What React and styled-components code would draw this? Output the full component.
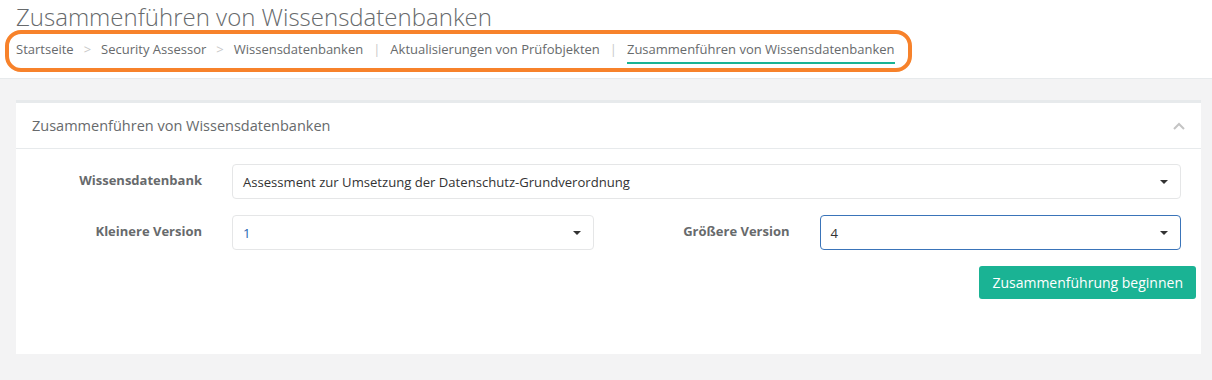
import React from "react";
import styled, { createGlobalStyle } from "styled-components";

const GlobalStyle = createGlobalStyle`
  body {
    margin: 0;
    background: #f3f3f4;
    font-family: "Open Sans", "Liberation Sans", sans-serif;
    color: #676a6c;
  }
`;

const PageHeader = styled.div`
  position: relative;
  background: #fff;
  height: 78px;
  border-bottom: 1px solid #e7eaec;
  padding: 0 16px;
`;

const Title = styled.h2`
  margin: 0;
  padding-top: 3px;
  font-size: 24px;
  font-weight: 300;
  line-height: 28px;
  color: #676a6c;
`;

const Crumbs = styled.ol`
  list-style: none;
  margin: 9px 0 0;
  padding: 0;
  display: flex;
  align-items: center;
  font-size: 13px;
`;

const Crumb = styled.li`
  padding-bottom: 4px;
  border-bottom: 2px solid ${(p) => (p.$active ? "#1ab394" : "transparent")};
  line-height: 18px;
  color: #676a6c;
`;

const Sep = styled.span`
  color: #c8c8c8;
  font-size: 13px;
  padding: 0 10px 6px;
  line-height: 18px;
`;

const Highlight = styled.div`
  position: absolute;
  left: 5px;
  top: 30px;
  width: 899px;
  height: 34px;
  border: 4px solid #f7822b;
  border-radius: 16px;
  pointer-events: none;
`;

const Panel = styled.section`
  margin: 21px 11px 0 16px;
  background: #fff;
  border-top: 3px solid #e7eaec;
`;

const PanelHead = styled.div`
  display: flex;
  align-items: center;
  justify-content: space-between;
  height: 45px;
  padding: 0 16px;
  border-bottom: 1px solid #e7eaec;
  font-size: 14.5px;
`;

const PanelBody = styled.div`
  padding: 15px 20px 55px 16px;
  display: flex;
  flex-direction: column;
  gap: 16px;
`;

const Row = styled.div`
  display: grid;
  grid-template-columns: ${(p) => p.$cols};
  column-gap: 30px;
  align-items: center;
`;

const Label = styled.label`
  text-align: right;
  font-weight: 700;
  font-size: 13px;
  color: #676a6c;
  padding-bottom: 3px;
`;

const Select = styled.div`
  height: 35px;
  box-sizing: border-box;
  display: flex;
  align-items: center;
  justify-content: space-between;
  padding: 0 12px 0 10px;
  border: 1px solid ${(p) => (p.$focus ? "#3a74b9" : "#e5e6e7")};
  border-radius: 4px;
  font-size: 13.1px;
  color: ${(p) => p.$color || "#333"};
`;

const Caret = styled.span`
  width: 0;
  height: 0;
  border-left: 4px solid transparent;
  border-right: 4px solid transparent;
  border-top: 4px solid #333;
`;

const Actions = styled.div`
  display: flex;
  justify-content: flex-end;
  margin-right: -15px;
`;

const Button = styled.button`
  height: 33px;
  padding: 0 13px;
  background: #1ab394;
  border: none;
  border-radius: 3px;
  color: #fff;
  font-family: inherit;
  font-size: 14px;
`;

function Chevron() {
  return (
    <svg width="12" height="8" viewBox="0 0 12 8">
      <polyline points="1,7 6,2 11,7" fill="none" stroke="#c4c4c4" strokeWidth="2" />
    </svg>
  );
}

const crumbs = [
  "Startseite",
  "Security Assessor",
  "Wissensdatenbanken",
  "Aktualisierungen von Prüfobjekten",
  "Zusammenführen von Wissensdatenbanken",
];
const seps = [">", ">", "|", "|"];

export default function App() {
  return (
    <>
      <GlobalStyle />
      <PageHeader>
        <Title>Zusammenführen von Wissensdatenbanken</Title>
        <Crumbs>
          {crumbs.map((c, i) => (
            <React.Fragment key={c}>
              <Crumb $active={i === crumbs.length - 1}>{c}</Crumb>
              {i < seps.length && <Sep>{seps[i]}</Sep>}
            </React.Fragment>
          ))}
        </Crumbs>
        <Highlight />
      </PageHeader>

      <Panel>
        <PanelHead>
          <span>Zusammenführen von Wissensdatenbanken</span>
          <Chevron />
        </PanelHead>
        <PanelBody>
          <Row $cols="170px 1fr">
            <Label>Wissensdatenbank</Label>
            <Select>
              Assessment zur Umsetzung der Datenschutz-Grundverordnung
              <Caret />
            </Select>
          </Row>
          <Row $cols="170px 1fr 166px 1fr">
            <Label>Kleinere Version</Label>
            <Select $color="#1c5fb0">
              1
              <Caret />
            </Select>
            <Label>Größere Version</Label>
            <Select $focus>
              4
              <Caret />
            </Select>
          </Row>
          <Actions>
            <Button>Zusammenführung beginnen</Button>
          </Actions>
        </PanelBody>
      </Panel>
    </>
  );
}
